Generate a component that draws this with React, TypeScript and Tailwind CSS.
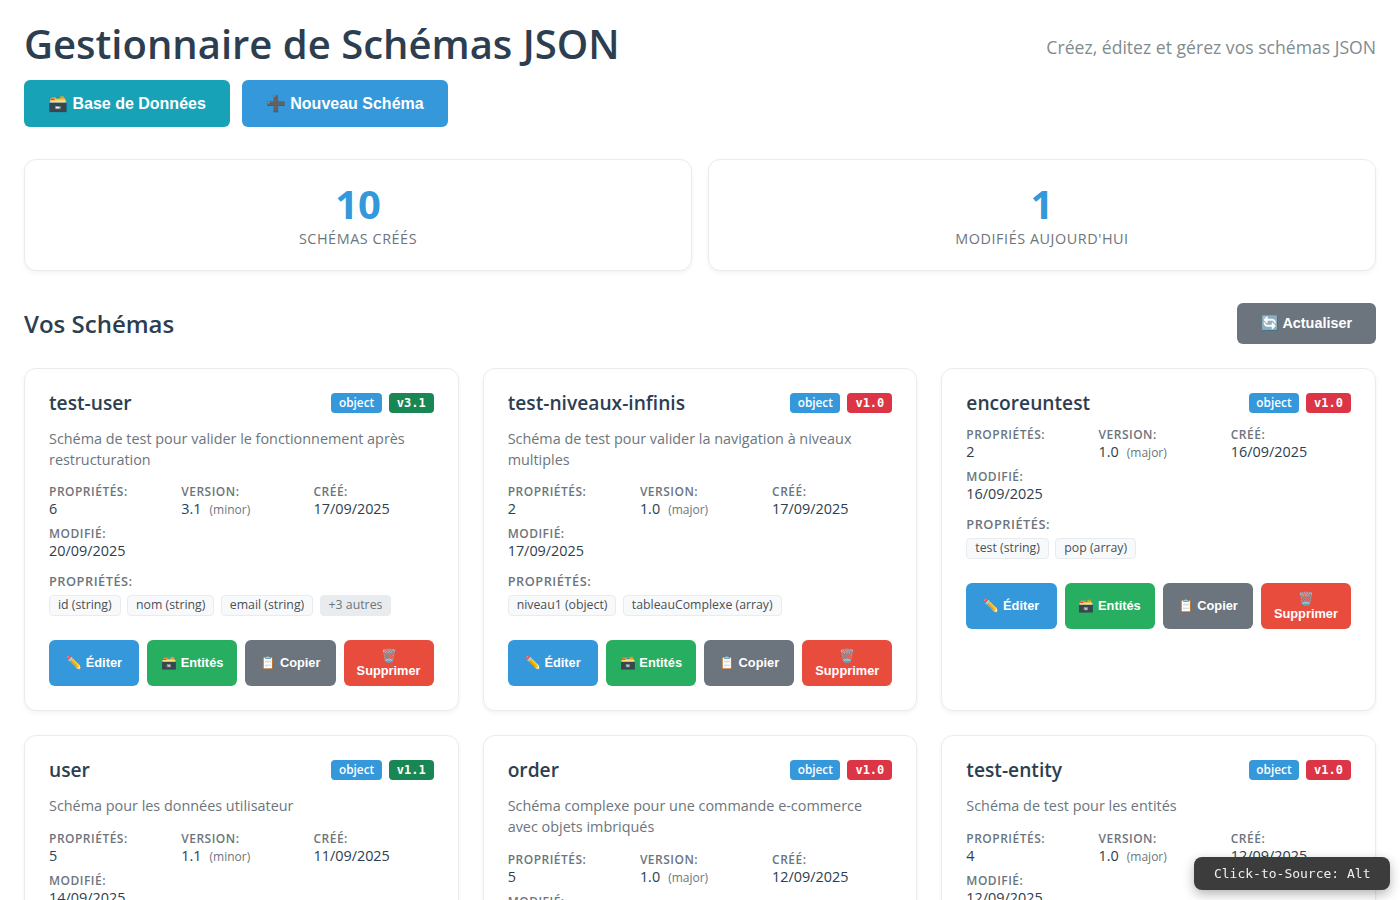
import React from "react";

interface Schema {
  name: string;
  description: string;
  version: string;
  bump: string;
  props: string;
  created: string;
  modified: string;
  tags: string[];
  more?: string;
}

const schemas: Schema[] = [
  {
    name: "test-user",
    description: "Schéma de test pour valider le fonctionnement après restructuration",
    version: "3.1",
    bump: "minor",
    props: "6",
    created: "17/09/2025",
    modified: "20/09/2025",
    tags: ["id (string)", "nom (string)", "email (string)"],
    more: "+3 autres",
  },
  {
    name: "test-niveaux-infinis",
    description: "Schéma de test pour valider la navigation à niveaux multiples",
    version: "1.0",
    bump: "major",
    props: "2",
    created: "17/09/2025",
    modified: "17/09/2025",
    tags: ["niveau1 (object)", "tableauComplexe (array)"],
  },
  {
    name: "encoreuntest",
    description: "",
    version: "1.0",
    bump: "major",
    props: "2",
    created: "16/09/2025",
    modified: "16/09/2025",
    tags: ["test (string)", "pop (array)"],
  },
  {
    name: "user",
    description: "Schéma pour les données utilisateur",
    version: "1.1",
    bump: "minor",
    props: "5",
    created: "11/09/2025",
    modified: "14/09/2025",
    tags: ["id (string)", "nom (string)"],
  },
  {
    name: "order",
    description: "Schéma complexe pour une commande e-commerce avec objets imbriqués",
    version: "1.0",
    bump: "major",
    props: "5",
    created: "12/09/2025",
    modified: "12/09/2025",
    tags: ["id (string)"],
  },
  {
    name: "test-entity",
    description: "Schéma de test pour les entités",
    version: "1.0",
    bump: "major",
    props: "4",
    created: "12/09/2025",
    modified: "12/09/2025",
    tags: ["id (string)"],
  },
];

function Meta({ label, children }: { label: string; children: React.ReactNode }) {
  return (
    <div>
      <div className="text-[12px] leading-[16px] font-semibold tracking-[0.5px] text-[#6c757d] uppercase">{label}</div>
      <div className="-mt-[1px] text-[14.4px] leading-[19px] text-[#2c3e50]">{children}</div>
    </div>
  );
}

function ActionButton({ color, icon, label, wrap }: { color: string; icon: string; label: string; wrap?: boolean }) {
  return (
    <button
      className={`flex-1 min-w-[80px] h-[46px] rounded-[6px] text-white text-[12.8px] leading-[15px] font-bold text-center font-['Liberation_Sans',sans-serif] ${wrap ? "" : "pb-[1px]"} ${color}`}
    >
      {icon}
      {wrap ? <br /> : " "}
      {label}
    </button>
  );
}

function SchemaCard({ schema }: { schema: Schema }) {
  const isMinor = schema.bump === "minor";
  return (
    <div className="bg-white border border-[#e9ecef] rounded-[12px] p-6 shadow-[0_2px_4px_rgba(0,0,0,0.05)] flex flex-col">
      <div className="flex items-center justify-between h-[20px] mb-4">
        <h3 className="text-[19.2px] leading-[28px] font-semibold text-[#2c3e50]">{schema.name}</h3>
        <div className="flex gap-[7px]">
          <span className="bg-[#3498db] text-white text-[11.84px] leading-[19px] h-[20px] px-[7.5px] rounded-[4px] font-semibold">object</span>
          <span
            className={`text-white text-[12px] leading-[20px] h-[20px] px-2 rounded-[4px] font-bold font-['DejaVu_Sans_Mono',monospace] ${isMinor ? "bg-[#198754]" : "bg-[#dc3545]"}`}
          >
            v{schema.version}
          </span>
        </div>
      </div>
      {schema.description ? (
        <p className="text-[14.4px] leading-[20.7px] text-[#6c757d] mb-[14px]">{schema.description}</p>
      ) : (
        <div className="-mt-[2px]" />
      )}
      <div className="grid grid-cols-3 gap-x-3 gap-y-[8px] mb-[13px]">
        <Meta label="Propriétés:">{schema.props}</Meta>
        <Meta label="Version:">
          {schema.version}
          <span className="ml-2 text-[12px] leading-[12px] text-[#6c757d]">({schema.bump})</span>
        </Meta>
        <Meta label="Créé:">{schema.created}</Meta>
        <Meta label="Modifié:">{schema.modified}</Meta>
      </div>
      <div className="mb-6">
        <div className="text-[12.8px] leading-[16px] font-semibold tracking-[0.5px] text-[#6c757d] uppercase mb-[6px]">Propriétés:</div>
        <div className="flex flex-wrap gap-[6.4px]">
          {schema.tags.map((t) => (
            <span
              key={t}
              className="bg-[#f8f9fa] border border-[#e9ecef] rounded-[4px] px-2 text-[12.3px] leading-[18.7px] text-[#495057]"
            >
              {t}
            </span>
          ))}
          {schema.more && (
            <span className="bg-[#e9ecef] border border-[#e9ecef] rounded-[4px] px-2 text-[12.3px] leading-[18.7px] text-[#6c757d]">
              {schema.more}
            </span>
          )}
        </div>
      </div>
      <div className="flex gap-2">
        <ActionButton color="bg-[#3498db]" icon="✏️" label="Éditer" />
        <ActionButton color="bg-[#27ae60]" icon="🗃️" label="Entités" />
        <ActionButton color="bg-[#6c757d]" icon="📋" label="Copier" />
        <ActionButton color="bg-[#e74c3c]" icon="🗑️" label="Supprimer" wrap />
      </div>
    </div>
  );
}

export default function App() {
  return (
    <div className="relative h-screen overflow-hidden bg-white p-6 font-['Open_Sans',sans-serif]">
      <div className="flex justify-between items-center h-[40px]">
        <h1 className="text-[40px] leading-[40px] font-semibold text-[#2c3e50]">Gestionnaire de Schémas JSON</h1>
        <p className="text-[17.6px] leading-[24px] mt-[6px] text-[#7f8c8d]">Créez, éditez et gérez vos schémas JSON</p>
      </div>
      <div className="flex gap-3 mt-4">
        <button className="h-[47px] px-6 rounded-[6px] bg-[#17a2b8] text-white text-[16px] font-bold font-['Liberation_Sans',sans-serif]">
          🗃️ Base de Données
        </button>
        <button className="h-[47px] px-6 rounded-[6px] bg-[#3498db] text-white text-[16px] font-bold font-['Liberation_Sans',sans-serif]">
          ➕ Nouveau Schéma
        </button>
      </div>

      <div className="grid grid-cols-2 gap-4 mt-8">
        {[
          ["10", "Schémas créés"],
          ["1", "Modifiés aujourd'hui"],
        ].map(([value, label]) => (
          <div
            key={label}
            className="h-[112px] bg-white border border-[#e9ecef] rounded-[12px] shadow-[0_2px_4px_rgba(0,0,0,0.05)] flex flex-col items-center justify-center"
          >
            <div className="text-[40px] leading-[46px] mb-[2px] font-bold text-[#3498db]">{value}</div>
            <div className="text-[14.4px] leading-[20px] tracking-[0.55px] text-[#6c757d] uppercase">{label}</div>
          </div>
        ))}
      </div>

      <div className="flex justify-between items-center mt-8 mb-6">
        <h2 className="text-[24px] leading-[32px] font-semibold text-[#2c3e50]">Vos Schémas</h2>
        <button className="h-[41px] px-6 rounded-[6px] bg-[#6c757d] text-white text-[14.4px] font-bold font-['Liberation_Sans',sans-serif]">
          🔄 Actualiser
        </button>
      </div>

      <div className="grid grid-cols-3 gap-6">
        {schemas.map((s) => (
          <SchemaCard key={s.name} schema={s} />
        ))}
      </div>

      <div className="fixed right-[10px] bottom-[10px] h-[33px] px-[19.5px] flex items-center rounded-[8px] bg-[#3c3c3c] text-[#f0f0f0] text-[13px] font-['DejaVu_Sans_Mono',monospace] shadow-[0_4px_12px_rgba(0,0,0,0.3)]">
        Click-to-Source: Alt
      </div>
    </div>
  );
}
